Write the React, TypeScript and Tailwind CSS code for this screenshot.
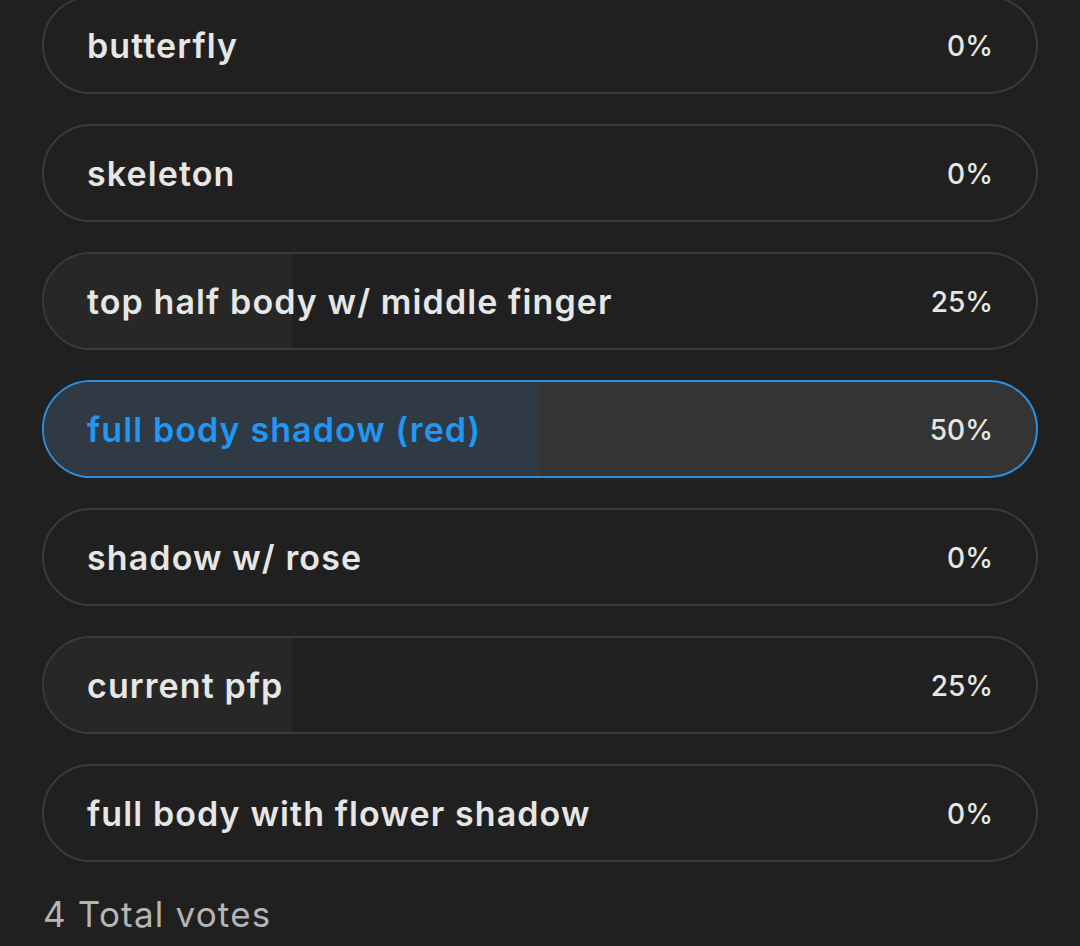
import React from "react";

type Opt = { label: string; pct: number; selected?: boolean };

const options: Opt[] = [
  { label: "butterfly", pct: 0 },
  { label: "skeleton", pct: 0 },
  { label: "top half body w/ middle finger", pct: 25 },
  { label: "full body shadow (red)", pct: 50, selected: true },
  { label: "shadow w/ rose", pct: 0 },
  { label: "current pfp", pct: 25 },
  { label: "full body with flower shadow", pct: 0 },
];

function Row({ o }: { o: Opt }) {
  return (
    <div
      className={
        "relative h-[98px] rounded-full border-2 overflow-hidden flex items-center justify-between pl-[43px] pr-[43px] " +
        (o.selected ? "border-[#2a8fe0] bg-[#343434]" : "border-[#3a3a3a] bg-[#202020]")
      }
    >
      <div
        className={"absolute left-0 top-0 bottom-0 " + (o.selected ? "bg-[#2f3a45]" : "bg-[#272727]")}
        style={{ width: `${o.pct}%` }}
      />
      <span
        className={
          "relative text-[34px] font-semibold tracking-[1.1px] leading-none pt-[2px] " +
          (o.selected ? "text-[#2196f3]" : "text-[#e6e6e6]")
        }
      >
        {o.label}
      </span>
      <span className="relative text-[28px] font-medium leading-none text-[#e6e6e6] pt-[1px]">
        {o.pct}%
      </span>
    </div>
  );
}

export default function App() {
  return (
    <div
      className="w-[1080px] h-[946px] bg-[#202020] overflow-hidden"
      style={{ fontFamily: "Inter, 'Noto Sans', sans-serif" }}
    >
      <div className="-mt-[4px] px-[42px] flex flex-col gap-[30px]">
        {options.map((o) => (
          <Row key={o.label} o={o} />
        ))}
      </div>
      <div className="px-[43px] mt-[33px] text-[35px] tracking-[1.2px] leading-[38px] text-[#b5b5b5]">
        4 Total votes
      </div>
    </div>
  );
}
